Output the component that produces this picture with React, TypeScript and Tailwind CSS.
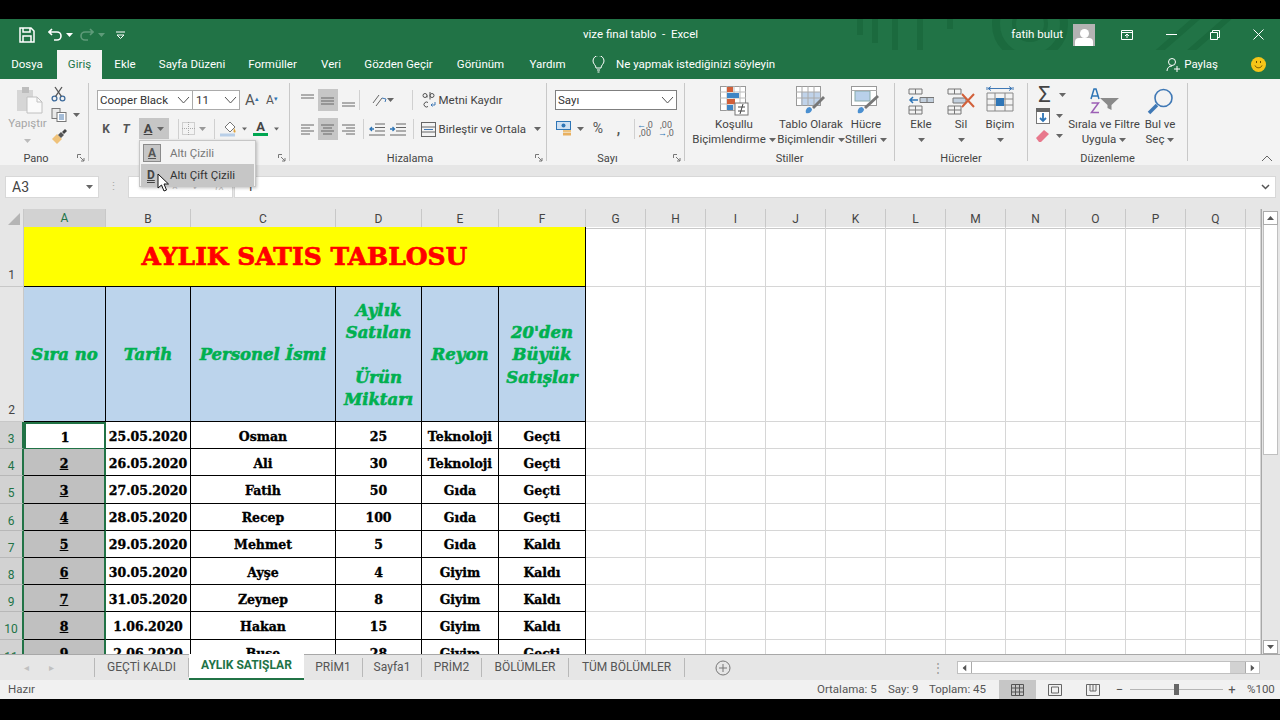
import React from 'react';

const cooper = "[font-family:'DejaVu_Serif',serif] font-bold";

const Caret = ({ className = 'text-[#666]' }: { className?: string }) => (
  <svg width="7" height="4" viewBox="0 0 7 4" className={className}>
    <path d="M0 0h7L3.500 4z" fill="currentColor" />
  </svg>
);

const Chevron = () => (
  <svg width="13" height="8" viewBox="0 0 13 8" fill="none" stroke="#555" strokeWidth="1">
    <path d="M1 1l5.500 6L12 1" />
  </svg>
);

// small square launcher in the corner of a ribbon group
const Launcher = () => (
  <svg width="8" height="8" viewBox="0 0 8 8" fill="none" stroke="#777" strokeWidth="1">
    <path d="M.5 4V.5H4M3 3l4 4M7 4v3H4" />
  </svg>
);

const Lines = ({ rows, stroke = '#666' }: { rows: [number, number, number][]; stroke?: string }) => (
  <svg width="15" height="15" viewBox="0 0 15 15" stroke={stroke} strokeWidth="1">
    {rows.map(([x1, x2, y], i) => (
      <path key={i} d={`M${x1} ${y}H${x2}`} />
    ))}
  </svg>
);

const Sep = ({ h = 'h-[20px]' }: { h?: string }) => <div className={`w-px ${h} bg-[#d0d0d0] shrink-0`} />;

const Cell = ({ w, active, children }: { w: string; active?: boolean; children?: React.ReactNode }) => (
  <div className={`${w} h-full flex items-center justify-center shrink-0 ${active ? 'bg-[#c6c6c6]' : ''}`}>{children}</div>
);

const Group = ({ w, label, launcher, children }: { w: string; label: string; launcher?: boolean; children: React.ReactNode }) => (
  <div className={`${w} h-[78px] shrink-0 border-r border-[#c8c8c8]`}>
    <div className="h-[68px]">{children}</div>
    <div className={`h-[14px] flex items-center justify-center relative text-[11px] text-[#444] leading-none ${launcher ? 'pr-[16px]' : ''}`}>
      {label}
      {launcher && (
        <span className="absolute right-[3px] top-[3px] flex">
          <Launcher />
        </span>
      )}
    </div>
  </div>
);

const Big = ({ w, icon, lines, caretLine }: { w: string; icon: React.ReactNode; lines: string[]; caretLine?: boolean }) => (
  <div className={`${w} shrink-0 flex flex-col items-center text-[11.500px] text-[#444] leading-[15px]`}>
    <div className="h-[30px] mt-[3px] mb-px flex items-center justify-center">{icon}</div>
    <div className="whitespace-nowrap">{lines[0]}</div>
    <div className="whitespace-nowrap h-[15px] flex items-center gap-[3px]">
      {lines[1]}
      {caretLine && <Caret />}
    </div>
  </div>
);

const PasteIcon = () => (
  <svg width="28" height="28" viewBox="0 0 28 28">
    <rect x="1" y="4" width="16" height="21" fill="#d6d6d6" />
    <rect x="6" y="1" width="7" height="6" fill="#bdbdbd" />
    <path d="M11 11h10l5 5v11H11z" fill="#fafafa" stroke="#c0c0c0" />
    <path d="M21 11v5h5" fill="none" stroke="#c0c0c0" />
  </svg>
);

const Scissors = () => (
  <svg width="15" height="16" viewBox="0 0 15 16" fill="none" stroke="#3f6c9c" strokeWidth="1.300">
    <circle cx="3.500" cy="12.500" r="2.400" />
    <circle cx="11.500" cy="12.500" r="2.400" />
    <path d="M4.600 10.300L11 1M10.400 10.300L4 1" stroke="#555" />
  </svg>
);

const CopyIcon = () => (
  <svg width="16" height="14" viewBox="0 0 16 14" fill="#fff" stroke="#777">
    <rect x="1" y=".5" width="8" height="10" fill="#e9e9e9" />
    <rect x="6" y="4.500" width="9" height="9" />
    <path d="M8 7h5M8 9h5M8 11h5" stroke="#4a7ab0" />
  </svg>
);

const Brush = () => (
  <svg width="16" height="15" viewBox="0 0 16 15">
    <path d="M1 10l5-5 5 5-5 5z" fill="#efc27a" />
    <path d="M7 6l3-3 3 3-3 3z" fill="#555" />
    <path d="M11 3l3-3 2 2-3 3z" fill="#444" />
  </svg>
);

const FillIcon = () => (
  <svg width="17" height="17" viewBox="0 0 17 17">
    <path d="M5 7l5-5 5 5-5 5z" fill="#fff" stroke="#777" />
    <path d="M14 8c1 2 2 3 1.500 4s-2 .5-2-.5z" fill="#e0a23a" />
    <rect x="0" y="13.500" width="15" height="3" fill="#b9cfe8" />
  </svg>
);

const BorderIcon = () => (
  <svg width="13" height="13" viewBox="0 0 13 13" fill="none" stroke="#aaa" strokeDasharray="1 1">
    <rect x=".5" y=".5" width="12" height="12" />
    <path d="M6.500 0v13M0 6.500h13" />
  </svg>
);

const WrapIcon = () => (
  <svg width="16" height="17" viewBox="0 0 16 17" fill="none" stroke="#555">
    <path d="M2 3.500a2 2 0 104 0v2M6 3.500a2 2 0 10-4 0M9 0v7.500M9 3.500a2 2 0 114 0 2 2 0 01-4 0" />
    <path d="M7 10.500a2.500 2.500 0 100 4" />
    <path d="M14 10v3h-4M11.500 11.500L10 13l1.500 1.500" stroke="#3f78b5" />
  </svg>
);

const MergeIcon = () => (
  <svg width="15" height="15" viewBox="0 0 15 15" fill="none" stroke="#666">
    <rect x=".5" y=".5" width="14" height="14" />
    <path d="M0 5h15M0 10h15" />
    <path d="M3 7.500h9" stroke="#3f78b5" />
  </svg>
);

const Orient = () => (
  <svg width="16" height="15" viewBox="0 0 16 15" fill="none" stroke="#666">
    <path d="M2 10l6-8M5 13l6-8" />
    <path d="M11 5l4 1-1 3" stroke="#3f78b5" />
  </svg>
);

const Indent = ({ flip }: { flip?: boolean }) => (
  <svg width="16" height="13" viewBox="0 0 16 13" stroke="#666">
    <path d="M6 1h10M6 4.500h10M6 8h10M0 12h16" />
    <path d={flip ? 'M0 6h4M2.500 4l2 2-2 2' : 'M1 6h4M3 4L1 6l2 2'} stroke="#2e75b6" strokeWidth="1.300" fill="none" />
  </svg>
);

const CurrencyIcon = () => (
  <svg width="16" height="15" viewBox="0 0 16 15">
    <rect x=".5" y=".5" width="14" height="8" fill="#cfe0f2" stroke="#2e75b6" />
    <circle cx="7.500" cy="4.500" r="2" fill="#2e75b6" />
    <rect x="7" y="9" width="8" height="2.500" fill="#eec27c" />
    <rect x="7" y="12" width="8" height="2.500" fill="#e8b060" />
  </svg>
);

const CondIcon = () => (
  <svg width="29" height="30" viewBox="0 0 29 30">
    <rect x=".5" y=".5" width="25" height="24" fill="#fff" stroke="#999" />
    <path d="M7 0v25M14 0v25M20 0v25M0 6h26M0 12h26M0 18h26" stroke="#bbb" />
    <rect x="7" y="1" width="6" height="5" fill="#d2603a" />
    <rect x="7" y="7" width="12" height="5" fill="#3f86c6" />
    <rect x="7" y="13" width="8" height="5" fill="#d2603a" />
    <rect x="7" y="19" width="6" height="5" fill="#3f86c6" />
    <rect x="15" y="17" width="13" height="12" fill="#fff" stroke="#777" />
    <path d="M18 21h7M18 25h7M23 18l-3 10" stroke="#444" fill="none" />
  </svg>
);

const TableIcon = () => (
  <svg width="30" height="30" viewBox="0 0 30 30">
    <rect x=".5" y=".5" width="24" height="19" fill="#fff" stroke="#999" />
    <rect x="5" y="6" width="19" height="13" fill="#c0d3ea" />
    <path d="M6 0v20M12 0v20M18 0v20M0 6h25M0 12h25" stroke="#aaa" />
    <path d="M10 27c-1-3 1-6 4-6l2 2c0 3-3 5-6 4z" fill="#4a8fd0" />
    <path d="M16 21l11-11 2 2-11 11z" fill="#777" />
  </svg>
);

const CellStyleIcon = () => (
  <svg width="30" height="30" viewBox="0 0 30 30">
    <rect x=".5" y=".5" width="25" height="19" fill="#fff" stroke="#999" />
    <rect x="4" y="5" width="15" height="10" fill="#b9d0ea" stroke="#8aa" />
    <path d="M0 4.500h26" stroke="#aaa" />
    <path d="M7 27c-1-3 1-6 4-6l2 2c0 3-3 5-6 4z" fill="#4a8fd0" />
    <path d="M13 21l13-12 2 2-13 12z" fill="#777" />
  </svg>
);

const InsertIcon = () => (
  <svg width="26" height="27" viewBox="0 0 26 27" fill="none" stroke="#777">
    <path d="M1 1h13v5H1zM7.500 1v5M1 18h13v8H1zM1 22h13M7.500 18v8" />
    <path d="M12 9.500H26v5H12zM19 9.500v5" fill="#c2cfdd" />
    <path d="M2 12h8M5 9l-3 3 3 3" stroke="#2e75b6" strokeWidth="1.500" />
  </svg>
);

const DeleteIcon = () => (
  <svg width="28" height="27" viewBox="0 0 28 27" fill="none" stroke="#777">
    <path d="M1 1h13v5H1zM7.500 1v5M1 18h13v8H1zM1 22h13M7.500 18v8" />
    <path d="M6 10h13v5H6z" fill="#c2cfdd" />
    <path d="M15 6l12 13M27 6L15 19" stroke="#d2603a" strokeWidth="2" />
  </svg>
);

const FormatIcon = () => (
  <svg width="28" height="30" viewBox="0 0 28 30" fill="none" stroke="#888">
    <path d="M1 4v-3M27 4v-3M2 2.500h24M2 2.500l3-2M2 2.500l3 2M26 2.500l-3-2M26 2.500l-3 2" stroke="#3f78b5" />
    <path d="M1 7h26v18H1zM9 7v18M19 7v18M1 13h26M1 19h26" />
    <rect x="10" y="12" width="8" height="8" fill="#2e75b6" stroke="none" />
  </svg>
);

const SortIcon = () => (
  <svg width="29" height="26" viewBox="0 0 29 26">
    <path d="M10 10h19l-7.500 7v5l-4-2v-3z" fill="#8a8a8a" />
    <path d="M1 11L4 1h2l3 10M2.500 8h5" fill="none" stroke="#2e75b6" strokeWidth="1.500" />
    <path d="M1.500 15h7l-7 9.500h7.500" fill="none" stroke="#9c5fb5" strokeWidth="1.500" />
  </svg>
);

const SearchIcon = () => (
  <svg width="27" height="27" viewBox="0 0 27 27" fill="none" stroke="#3f78b5">
    <circle cx="16.500" cy="10" r="8.500" strokeWidth="1.600" />
    <path d="M10 17L2 25" strokeWidth="3.500" />
  </svg>
);

const Ribbon = () => (
  <div className="h-[86px] bg-[#f3f3f3] flex pt-[4px] relative">
    <Group w="w-[89px]" label="Pano" launcher>
      <div className="flex h-full">
        <div className="w-[51px] pl-[4px] flex flex-col items-center text-[11.500px] text-[#a6a6a6] leading-[15px]">
          <div className="pt-[3px] pb-[2px] h-[33px] ml-[5px]">
            <PasteIcon />
          </div>
          <div>Yapıştır</div>
          <div className="mt-[8px]">
            <Caret className="text-[#bbb]" />
          </div>
        </div>
        <div className="flex flex-col items-start pt-[1px]">
          <div className="h-[19px] flex items-center">
            <Scissors />
          </div>
          <div className="h-[24px] flex items-center gap-[6px]">
            <CopyIcon />
            <Caret />
          </div>
          <div className="h-[18px] flex items-center">
            <Brush />
          </div>
        </div>
      </div>
    </Group>

    <Group w="w-[201px]" label="" launcher>
      <div className="pt-[7px] pl-[8px]">
        <div className="flex items-center h-[20px]">
          <div className="w-[96px] h-full bg-white border border-[#ababab] flex items-center justify-between pl-[2px] pr-[2px] text-[11.500px] text-[#333]">
            <span className="pt-px">Cooper Black</span>
            <Chevron />
          </div>
          <div className="w-[47px] h-full bg-white border border-[#ababab] border-l-0 flex items-center justify-between pl-[3px] pr-[2px] text-[11.500px] text-[#333]">
            <span className="pt-px">11</span>
            <Chevron />
          </div>
          <div className="w-[20px] ml-[2px] text-center text-[15px] text-[#555] leading-none">
            A<sup className="text-[7px] text-[#2e75b6]">▴</sup>
          </div>
          <div className="w-[20px] text-center text-[12px] text-[#555] leading-none">
            A<sup className="text-[7px] text-[#2e75b6]">▾</sup>
          </div>
        </div>
        <div className="flex items-center h-[21px] mt-[8px] -ml-[1px]">
          <Cell w="w-[20px]">
            <span className="text-[12px] font-bold text-[#555]">K</span>
          </Cell>
          <Cell w="w-[20px]">
            <span className="text-[12px] font-bold italic text-[#555]">T</span>
          </Cell>
          <div className="w-[3px] shrink-0" />
          <div className="w-[30px] h-full bg-[#c6c6c6] flex items-center shrink-0">
            <span className="w-[18px] text-center text-[13px] font-bold text-[#444] underline leading-none">A</span>
            <Caret />
          </div>
          <div className="w-[9px] shrink-0" />
          <Sep />
          <Cell w="w-[18px]">
            <BorderIcon />
          </Cell>
          <Cell w="w-[10px]">
            <Caret className="text-[#999]" />
          </Cell>
          <div className="w-[7px] shrink-0" />
          <Sep />
          <Cell w="w-[27px]">
            <FillIcon />
          </Cell>
          <Cell w="w-[5px]">
            <Caret />
          </Cell>
          <Cell w="w-[27px]">
            <span className="flex flex-col items-center text-[13px] font-bold text-[#444] leading-[12px]">
              A<span className="w-[15px] h-[3px] bg-[#00a651]" />
            </span>
          </Cell>
          <Cell w="w-[5px]">
            <Caret />
          </Cell>
        </div>
      </div>
    </Group>

    <Group w="w-[257px]" label="Hizalama" launcher>
      <div className="pt-[6px] pl-[7px]">
        <div className="flex items-center h-[22px]">
          <Cell w="w-[20.500px]">
            <Lines rows={[[1, 14, 2], [1, 14, 5]]} />
          </Cell>
          <Cell w="w-[20.500px]" active>
            <Lines rows={[[1, 14, 5], [1, 14, 8], [1, 14, 11]]} />
          </Cell>
          <Cell w="w-[20.500px]">
            <Lines rows={[[1, 14, 10], [1, 14, 13]]} />
          </Cell>
          <Sep />
          <div className="w-[11px] shrink-0" />
          <Orient />
          <Caret />
          <div className="w-[18px] shrink-0" />
          <Sep />
          <div className="w-[8px] shrink-0" />
          <WrapIcon />
          <span className="ml-[2px] pt-px text-[11.500px] text-[#444] whitespace-nowrap">Metni Kaydır</span>
        </div>
        <div className="flex items-center h-[22px] mt-[7px]">
          <Cell w="w-[20.500px]">
            <Lines rows={[[1, 14, 3], [1, 10, 6], [1, 14, 9], [1, 10, 12]]} />
          </Cell>
          <Cell w="w-[20.500px]" active>
            <Lines rows={[[1, 14, 3], [3, 12, 6], [1, 14, 9], [3, 12, 12]]} />
          </Cell>
          <Cell w="w-[20.500px]">
            <Lines rows={[[1, 14, 3], [5, 14, 6], [1, 14, 9], [5, 14, 12]]} />
          </Cell>
          <div className="w-[4px] shrink-0" />
          <Sep />
          <Cell w="w-[26px]">
            <Indent />
          </Cell>
          <Cell w="w-[17px]">
            <Indent flip />
          </Cell>
          <div className="w-[6px] shrink-0" />
          <Sep />
          <div className="w-[7px] shrink-0" />
          <MergeIcon />
          <span className="ml-[3px] pt-px text-[11.500px] text-[#444] whitespace-nowrap">Birleştir ve Ortala</span>
          <span className="ml-[8px] flex">
            <Caret />
          </span>
        </div>
      </div>
    </Group>

    <Group w="w-[138px]" label="Sayı" launcher>
      <div className="pt-[7px] pl-[8px]">
        <div className="w-[122px] h-[20px] bg-white border border-[#7f7f7f] flex items-center justify-between pl-[2px] pr-[2px] text-[11.500px] text-[#333]">
          <span className="pt-px">Sayı</span>
          <Chevron />
        </div>
        <div className="flex items-center h-[21px] mt-[8px]">
          <Cell w="w-[18px]">
            <CurrencyIcon />
          </Cell>
          <Cell w="w-[14px]">
            <Caret />
          </Cell>
          <Cell w="w-[22px]">
            <span className="text-[14px] text-[#555]">%</span>
          </Cell>
          <Cell w="w-[19px]">
            <span className="text-[14px] font-bold text-[#555] leading-none">,</span>
          </Cell>
          <div className="w-[6px] shrink-0" />
          <Sep />
          <Cell w="w-[20px]">
            <span className="text-[9px] leading-[8px] text-[#666] text-center whitespace-nowrap">
              <span className="text-[#2e75b6]">←</span>,0
              <br />,00
            </span>
          </Cell>
          <Cell w="w-[22px]">
            <span className="text-[9px] leading-[8px] text-[#666] text-center whitespace-nowrap">
              ,00
              <br />
              <span className="text-[#2e75b6]">→</span>,0
            </span>
          </Cell>
        </div>
      </div>
    </Group>

    <Group w="w-[210px]" label="Stiller">
      <div className="flex pl-[8px]">
        <Big w="w-[82px]" icon={<CondIcon />} lines={['Koşullu', 'Biçimlendirme']} caretLine />
        <Big w="w-[72px]" icon={<TableIcon />} lines={['Tablo Olarak', 'Biçimlendir']} caretLine />
        <Big w="w-[38px]" icon={<CellStyleIcon />} lines={['Hücre', 'Stilleri']} caretLine />
      </div>
    </Group>

    <Group w="w-[133px]" label="Hücreler">
      <div className="flex pl-[6px]">
        <Big w="w-[40px]" icon={<InsertIcon />} lines={['Ekle', '']} caretLine />
        <Big w="w-[40px]" icon={<DeleteIcon />} lines={['Sil', '']} caretLine />
        <Big w="w-[38px]" icon={<FormatIcon />} lines={['Biçim', '']} caretLine />
      </div>
    </Group>

    <Group w="w-[160px]" label="Düzenleme">
      <div className="flex pl-[8px]">
        <div className="w-[32px] flex flex-col pt-[1px]">
          <div className="h-[21px] flex items-center gap-[6px]">
            <span className="w-[17px] text-[22px] leading-none text-[#444] text-center">Σ</span>
            <Caret />
          </div>
          <div className="h-[21px] flex items-center gap-[6px]">
            <svg width="14" height="16" viewBox="0 0 14 16">
              <rect x=".5" y=".5" width="13" height="15" fill="#fff" stroke="#777" />
              <rect x="0" y="0" width="14" height="4" fill="#666" />
              <path d="M7 5v8M4 10l3 3 3-3" stroke="#2e75b6" strokeWidth="1.800" fill="none" />
            </svg>
            <Caret />
          </div>
          <div className="h-[20px] flex items-center gap-[6px]">
            <svg width="14" height="12" viewBox="0 0 14 12">
              <path d="M0 8l8-8 5 4-8 8H3z" fill="#e8788c" />
            </svg>
            <Caret />
          </div>
        </div>
        <Big w="w-[72px]" icon={<SortIcon />} lines={['Sırala ve Filtre', 'Uygula']} caretLine />
        <Big w="w-[40px]" icon={<SearchIcon />} lines={['Bul ve', 'Seç']} caretLine />
      </div>
    </Group>

    <div className="flex-1 relative">
      <svg width="12" height="7" viewBox="0 0 12 7" fill="none" stroke="#666" className="absolute right-[7px] top-[72px]">
        <path d="M1 6l5-5 5 5" />
      </svg>
    </div>

    {/* underline split-button menu */}
    <div className="absolute left-[139px] top-[61px] w-[117px] h-[47px] bg-[#f3f3f3] border border-[#c6c6c6] shadow-[1px_1px_3px_rgba(0,0,0,0.25)] z-20 pt-px px-px text-[11.500px]">
      <div className="h-[22px] flex items-center">
        <span className="ml-[2px] w-[18px] h-[18px] bg-[#c6c6c6] border border-[#8a8a8a] flex items-center justify-center text-[12px] font-bold text-[#555] underline">A</span>
        <span className="ml-[9px] pt-px text-[#777]">Altı Çizili</span>
      </div>
      <div className="h-[22px] flex items-center bg-[#c6c6c6]">
        <span className="ml-[6px] w-[11px] text-[12px] font-bold text-[#444] underline decoration-double">D</span>
        <span className="ml-[12px] pt-px text-[#333]">Altı Çift Çizili</span>
      </div>
    </div>
    <svg width="12" height="19" viewBox="0 0 12 19" className="absolute left-[157px] top-[94px] z-30">
      <path d="M1 1v14l3.500-3 2.500 6 2.500-1-2.500-6h4.500z" fill="#fff" stroke="#111" strokeWidth="1" />
    </svg>
  </div>
);

const FormulaBar = () => (
  <div className="bg-[#e6e6e6] h-[44px] pt-[11px]">
    <div className="h-[22px] flex items-stretch">
      <div className="ml-[5px] w-[94px] bg-white border border-[#d8d8d8] flex items-center justify-between pl-[6px] pr-[5px] text-[14px] text-[#444]">
        A3
        <Caret />
      </div>
      <div className="w-[29px] flex items-center justify-center text-[#aaa] text-[11px]">⋮</div>
      <div className="w-[105px] bg-white border border-[#d8d8d8] flex items-center justify-end gap-[14px] pr-[8px] text-[#c8c8c8] text-[11px]">
        <span>×</span>
        <span>✓</span>
        <span className="italic">fx</span>
      </div>
      <div className="ml-[1px] flex-1 mr-[4px] bg-white border border-[#d8d8d8] flex items-center justify-between pl-[12px] pr-[5px] text-[12px] text-[#333]">
        1
        <svg width="9" height="6" viewBox="0 0 9 6" fill="none" stroke="#555" strokeWidth="1.500">
          <path d="M1 1l3.500 3.500L8 1" />
        </svg>
      </div>
    </div>
  </div>
);

const cols = 'grid grid-cols-[24px_82px_85px_145px_86px_77px_87px_repeat(11,60px)_15px]';
const letters = ['A', 'B', 'C', 'D', 'E', 'F', 'G', 'H', 'I', 'J', 'K', 'L', 'M', 'N', 'O', 'P', 'Q', ''];

const rows = [
  ['1', '25.05.2020', 'Osman', '25', 'Teknoloji', 'Geçti'],
  ['2', '26.05.2020', 'Ali', '30', 'Teknoloji', 'Geçti'],
  ['3', '27.05.2020', 'Fatih', '50', 'Gıda', 'Geçti'],
  ['4', '28.05.2020', 'Recep', '100', 'Gıda', 'Geçti'],
  ['5', '29.05.2020', 'Mehmet', '5', 'Gıda', 'Kaldı'],
  ['6', '30.05.2020', 'Ayşe', '4', 'Giyim', 'Kaldı'],
  ['7', '31.05.2020', 'Zeynep', '8', 'Giyim', 'Kaldı'],
  ['8', '1.06.2020', 'Hakan', '15', 'Giyim', 'Kaldı'],
  ['9', '2.06.2020', 'Buse', '28', 'Giyim', 'Geçti'],
];

const headers: string[][] = [
  ['Sıra no'],
  ['Tarih'],
  ['Personel İsmi'],
  ['Aylık', 'Satılan', '', 'Ürün', 'Miktarı'],
  ['Reyon'],
  ["20'den", 'Büyük', 'Satışlar'],
];

const Empty = ({ count }: { count: number }) => (
  <>
    {Array.from({ length: count }).map((_, i) => (
      <div key={i} className="border-r border-b border-[#d6d6d6]" />
    ))}
  </>
);

const RowNum = ({ n, selected, alignEnd }: { n: number; selected?: boolean; alignEnd?: boolean }) => (
  <div
    className={`flex justify-center text-[12px] border-b ${alignEnd ? 'items-end pb-[2px]' : 'items-center pt-[8px]'} ${
      selected ? 'bg-[#d2d2d2] text-[#217346] border-[#b8b8b8] border-r-2 border-r-[#217346]' : 'bg-[#e6e6e6] text-[#444] border-[#c8c8c8] border-r border-r-[#c8c8c8]'
    }`}
  >
    {n}
  </div>
);

const Sheet = () => (
  <div className="h-[445px] bg-white flex">
    <div className="w-[1261px] shrink-0 overflow-hidden">
      <div className={`${cols} h-[18px] bg-[#e6e6e6] text-[12px] text-[#444]`}>
        <div className="flex items-end justify-end pr-[3px] pb-[3px] border-r border-b border-[#c8c8c8]">
          <svg width="12" height="12" viewBox="0 0 12 12">
            <path d="M12 0v12H0z" fill="#b5b5b5" />
          </svg>
        </div>
        {letters.map((l, i) => (
          <div
            key={i}
            className={`flex items-center justify-center border-r border-[#c8c8c8] ${
              i === 0 ? 'bg-[#d2d2d2] text-[#217346] border-b-2 border-b-[#217346]' : 'border-b'
            }`}
          >
            {l}
          </div>
        ))}
      </div>
      <div className={`${cols} grid-rows-[60px_135px_repeat(9,27.2px)] h-[427px] overflow-hidden`}>
        <RowNum n={1} alignEnd />
        <div className={`col-span-6 bg-[#ffff00] border-r border-b border-black flex items-center justify-center pt-px text-[25px] text-[#ff0000] [-webkit-text-stroke:0.7px_#ff0000] ${cooper}`}>
          AYLIK SATIS TABLOSU
        </div>
        <Empty count={12} />

        <RowNum n={2} alignEnd />
        {headers.map((h, i) => (
          <div key={i} className={`bg-[#bcd4ec] border-r border-b border-black flex flex-col items-center justify-center pt-[3px] text-[16.500px] leading-[22.300px] italic text-[#00b050] [-webkit-text-stroke:0.6px_#00b050] whitespace-nowrap overflow-hidden ${cooper}`}>
            {h.map((line, j) => (
              <div key={j} className="h-[22.300px]">
                {line}
              </div>
            ))}
          </div>
        ))}
        <Empty count={12} />

        {rows.map((r, i) => (
          <React.Fragment key={i}>
            <RowNum n={i + 3} selected />
            {r.map((v, j) => (
              <div
                key={j}
                className={`flex items-center justify-center pt-[4px] text-[12.500px] text-black [-webkit-text-stroke:0.35px_#000] border-b whitespace-nowrap overflow-hidden ${cooper} ${
                  j === 0
                    ? i === 0
                      ? 'bg-white border-2 border-[#217346]'
                      : 'bg-[#c0c0c0] underline border-b-black border-r-2 border-r-[#217346]'
                    : 'border-r border-black'
                }`}
              >
                {v}
              </div>
            ))}
            <Empty count={12} />
          </React.Fragment>
        ))}
      </div>
    </div>
    {/* vertical scrollbar */}
    <div className="w-[19px] bg-[#e6e6e6] flex flex-col items-start pl-[1px] pt-[2px] border-l border-[#a8a8a8]">
      <div className="w-[15px] h-[14px] bg-white border border-[#ababab] flex items-center justify-center">
        <Caret className="text-[#555] rotate-180" />
      </div>
      <div className="w-[15px] h-[230px] bg-white border-x border-b border-[#c0c0c0]" />
      <div className="flex-1" />
      <div className="w-[15px] h-[14px] bg-white border border-[#ababab] flex items-center justify-center">
        <Caret className="text-[#555]" />
      </div>
    </div>
  </div>
);

const tabs = [
  { name: 'GEÇTİ KALDI', w: 'w-[94px]' },
  { name: 'AYLIK SATIŞLAR', w: 'w-[115px]' },
  { name: 'PRİM1', w: 'w-[59px]' },
  { name: 'Sayfa1', w: 'w-[59px]' },
  { name: 'PRİM2', w: 'w-[60px]' },
  { name: 'BÖLÜMLER', w: 'w-[87px]' },
  { name: 'TÜM BÖLÜMLER', w: 'w-[116px]' },
];

const TabBar = () => (
  <div className="h-[26px] bg-[#e6e6e6] border-t border-[#a8a8a8] flex items-stretch text-[12px] text-[#555]">
    <div className="w-[95px] shrink-0 flex items-center text-[#c0c0c0] text-[10px] border-r border-[#b8b8b8] my-[3px]">
      <span className="ml-[24px]">◂</span>
      <span className="ml-[20px]">▸</span>
    </div>
    {tabs.map((t, i) =>
      i === 1 ? (
        <div key={t.name} className={`${t.w} shrink-0 -mt-px pb-[2px] bg-white border-b-2 border-[#217346] flex items-center justify-center font-bold text-[#217346] whitespace-nowrap`}>
          {t.name}
        </div>
      ) : (
        <div key={t.name} className={`${t.w} shrink-0 my-[3px] pb-[2px] border-r border-[#b8b8b8] flex items-center justify-center whitespace-nowrap`}>
          {t.name}
        </div>
      ),
    )}
    <div className="w-[46px] shrink-0 flex items-center justify-end">
      <svg width="16" height="16" viewBox="0 0 16 16" fill="none" stroke="#777">
        <circle cx="8" cy="8" r="7" />
        <path d="M8 4v8M4 8h8" />
      </svg>
    </div>
    <div className="flex-1 flex items-center justify-end text-[#999]">⋮</div>
    <div className="w-[13px]" />
    <div className="flex items-center">
      <div className="w-[303px] h-[13px] bg-[#d2d2d2] border border-[#c0c0c0] flex items-stretch">
        <div className="w-[14px] bg-white border-r border-[#ababab] flex items-center justify-center">
          <Caret className="text-[#555] rotate-90" />
        </div>
        <div className="w-[258px] bg-white" />
        <div className="flex-1" />
        <div className="w-[14px] bg-white border-l border-[#ababab] flex items-center justify-center">
          <Caret className="text-[#555] -rotate-90" />
        </div>
      </div>
    </div>
    <div className="w-[20px]" />
  </div>
);

const StatusBar = () => (
  <div className="h-[19px] bg-[#f1f1f1] flex items-center text-[11.500px] text-[#555]">
    <span className="ml-[8px]">Hazır</span>
    <div className="flex-1" />
    <span className="w-[71px]">Ortalama: 5</span>
    <span className="w-[41px]">Say: 9</span>
    <span className="w-[70px]">Toplam: 45</span>
    <div className="w-[37px] h-full bg-[#c6c6c6] flex items-center justify-center">
      <svg width="13" height="12" viewBox="0 0 13 12" fill="none" stroke="#555">
        <path d="M.5.500h12v11H.5zM4.500 0v12M8.500 0v12M0 4h13M0 8h13" />
      </svg>
    </div>
    <div className="w-[38px] flex justify-center">
      <svg width="14" height="12" viewBox="0 0 14 12" fill="none" stroke="#666">
        <path d="M.5.500h13v11H.5zM3.500 3h7v6h-7z" />
      </svg>
    </div>
    <div className="w-[37px] flex justify-center">
      <svg width="14" height="12" viewBox="0 0 14 12" fill="none" stroke="#666">
        <path d="M.5.500h13v11H.5zM4 0v7h6V0M7 0v7" />
      </svg>
    </div>
    <span className="w-[17px] text-center text-[13px]">−</span>
    <div className="w-[93px] h-px bg-[#b5b5b5] relative ml-[2px]">
      <div className="absolute left-[44px] -top-[5px] w-[5px] h-[11px] bg-[#666]" />
    </div>
    <span className="w-[18px] text-center text-[13px]">+</span>
    <span className="w-[27px] ml-[6px] mr-[6px] text-center">%100</span>
  </div>
);

const App = () => (
  <div className="w-[1280px] h-[720px] bg-black overflow-hidden flex flex-col [font-family:'Roboto',sans-serif]">
    <div className="h-[19px] shrink-0" />

    {/* title bar */}
    <div className="h-[31px] shrink-0 bg-[#217346] flex items-center relative text-[11.500px] text-white">
      <svg width="390" height="60" viewBox="0 0 390 60" fill="none" stroke="#1b6a3e" className="absolute right-[40px] top-0">
        <circle cx="180" cy="5" r="34" strokeWidth="8" />
        <circle cx="180" cy="5" r="16" strokeWidth="4" />
        <path d="M10 0v16M25 0v24M45 0v34M70 0v32M100 0v10M300 40L380 -30M320 50L400 -20" strokeWidth="6" />
      </svg>
      <div className="relative flex items-center pl-[19px]">
        <svg width="16" height="16" viewBox="0 0 16 16" fill="none" stroke="#fff" strokeWidth="1.500">
          <path d="M1 1h11l3 3v11H1zM4 1v4h7V1M4 15v-6h8v6" />
        </svg>
        <svg width="14" height="13" viewBox="0 0 14 13" fill="none" stroke="#fff" strokeWidth="1.600" className="ml-[13px]">
          <path d="M1 4h8a4 4 0 010 8H6M4 1L1 4l3 3" />
        </svg>
        <span className="ml-[4px] flex">
          <Caret className="text-white" />
        </span>
        <svg width="14" height="13" viewBox="0 0 14 13" fill="none" stroke="#5e9b79" strokeWidth="1.600" className="ml-[7px]">
          <path d="M13 4H5a4 4 0 000 8h3M10 1l3 3-3 3" />
        </svg>
        <span className="ml-[4px] flex">
          <Caret className="text-[#5e9b79]" />
        </span>
        <svg width="9" height="8" viewBox="0 0 9 8" fill="none" stroke="#fff" className="ml-[11px]">
          <path d="M0 1h9M1 4h7L4.500 7.500z" />
        </svg>
      </div>
      <div className="absolute left-[583px]">vize final tablo&nbsp; -&nbsp; Excel</div>
      <div className="relative ml-auto flex items-center h-full">
        <span>fatih bulut</span>
        <div className="ml-[10px] w-[22px] h-[22px] bg-[#b3b3b3] flex flex-col items-center justify-end overflow-hidden">
          <div className="w-[9px] h-[9px] rounded-full bg-white" />
          <div className="w-[18px] h-[8px] bg-white rounded-t-[4px]" />
        </div>
        <svg width="12" height="10" viewBox="0 0 12 10" fill="none" stroke="#fff" className="ml-[26px]">
          <path d="M.5.500h11v9H.5zM0 2.500h12M6 8V4M4 6l2-2 2 2" />
        </svg>
        <div className="w-[11px] h-px bg-white ml-[33px]" />
        <svg width="10" height="10" viewBox="0 0 10 10" fill="none" stroke="#fff" className="ml-[33px]">
          <path d="M.5 2.500h7v7h-7zM2.500 2V.5h7v7H8" />
        </svg>
        <svg width="11" height="11" viewBox="0 0 11 11" fill="none" stroke="#fff" className="ml-[33px] mr-[16px]">
          <path d="M.5.500l10 10M10.500.500l-10 10" />
        </svg>
      </div>
    </div>

    {/* ribbon tabs */}
    <div className="h-[29px] shrink-0 bg-[#217346] flex items-stretch text-[11.500px] text-white relative">
      <div className="w-[54px] flex items-center justify-center">Dosya</div>
      <div className="w-[3px]" />
      <div className="w-[45px] bg-[#f3f3f3] text-[#217346] flex items-center justify-center">Giriş</div>
      <div className="w-[46px] flex items-center justify-center">Ekle</div>
      <div className="w-[88px] flex items-center justify-center">Sayfa Düzeni</div>
      <div className="w-[73px] flex items-center justify-center">Formüller</div>
      <div className="w-[44px] flex items-center justify-center">Veri</div>
      <div className="w-[91px] flex items-center justify-center">Gözden Geçir</div>
      <div className="w-[73px] flex items-center justify-center">Görünüm</div>
      <div className="w-[61px] flex items-center justify-center">Yardım</div>
      <div className="w-[14px]" />
      <svg width="13" height="17" viewBox="0 0 13 17" fill="none" stroke="#fff" className="self-center">
        <path d="M4 12c0-3-3-4-3-7a5.500 5.500 0 0111 0c0 3-3 4-3 7zM5 14h3M5.500 16h2" />
      </svg>
      <div className="ml-[11px] flex items-center whitespace-nowrap">Ne yapmak istediğinizi söyleyin</div>
      <div className="ml-auto flex items-center">
        <svg width="15" height="15" viewBox="0 0 15 15" fill="none" stroke="#fff">
          <circle cx="6" cy="5" r="3.500" />
          <path d="M1 14c0-3 2-5 5-5M8 12h6M11 9v6" />
        </svg>
        <span className="ml-[3px]">Paylaş</span>
        <span className="ml-[33px] mr-[14px] w-[15px] h-[15px] rounded-full bg-[#f5c518] flex items-center justify-center">
          <svg width="11" height="11" viewBox="0 0 11 11" fill="none" stroke="#6b4e00">
            <path d="M2 6.500c1 3 6 3 7 0" />
            <path d="M3.500 2v2M7.500 2v2" />
          </svg>
        </span>
      </div>
    </div>

    <Ribbon />
    <FormulaBar />
    <Sheet />
    <TabBar />
    <StatusBar />
  </div>
);

export default App;
